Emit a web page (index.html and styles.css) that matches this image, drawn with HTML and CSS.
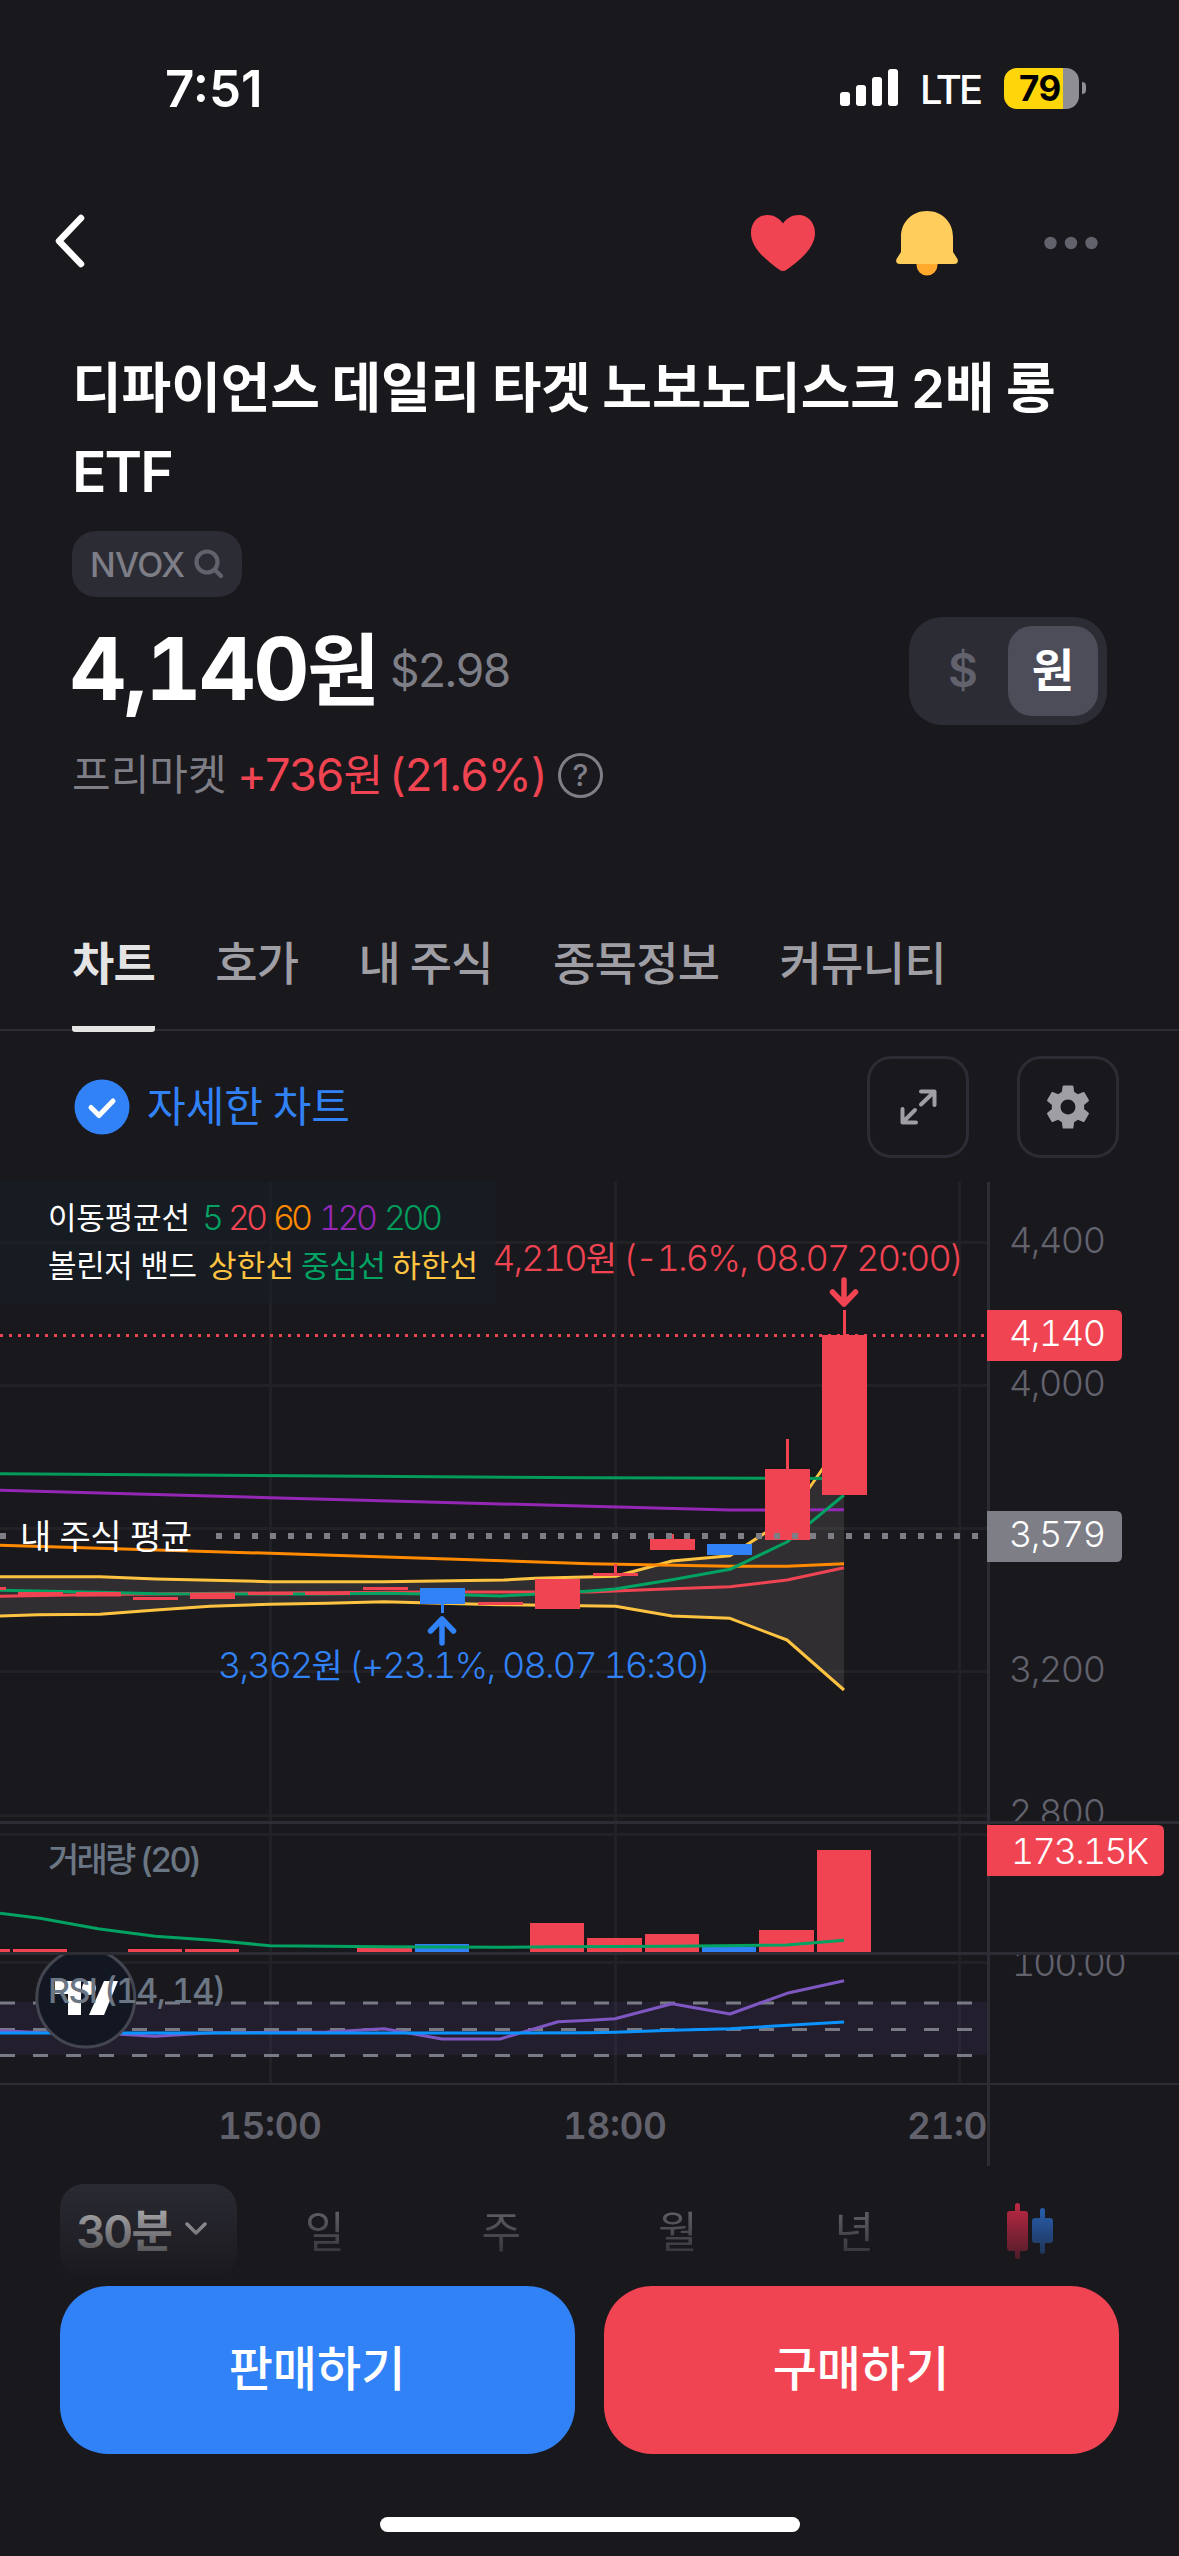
FILE: index.html
```html
<!DOCTYPE html>
<html lang="ko">
<head>
    <meta charset="UTF-8">
    <meta name="viewport" content="width=device-width, initial-scale=1.0">
    <title>NVOX</title>
    <link rel="stylesheet" href="styles.css">
</head>
<body>

<!-- Status bar -->
<div class="status-bar">
    <span class="time">7:51</span>
    <div class="status-right">
        <svg class="signal" width="58" height="38" viewBox="0 0 58 38" fill="#fff">
            <rect x="0" y="23" width="10" height="14" rx="3"/>
            <rect x="16" y="16" width="10" height="21" rx="3"/>
            <rect x="32" y="8" width="10" height="29" rx="3"/>
            <rect x="48" y="0" width="10" height="37" rx="3"/>
        </svg>
        <span class="network">LTE</span>
        <div class="battery"><span>79</span></div>
        <div class="battery-tip"></div>
    </div>
</div>

<!-- Navigation -->
<div class="nav">
    <svg width="34" height="56" viewBox="0 0 34 56" fill="none" stroke="#fff" stroke-width="6.5" stroke-linecap="round" stroke-linejoin="round">
        <path d="M28 5 L6 28 L28 51"/>
    </svg>
    <div class="nav-icons">
        <svg width="66" height="66" viewBox="0 0 66 66">
            <path fill="#f04452" d="M33 13.500C29 8 24 5 17.500 5C8 5 1 12.500 1 23C1 38 16 50 29 59.500Q33 62.500 37 59.500C50 50 65 38 65 23C65 12.500 58 5 48.500 5C42 5 37 8 33 13.500Z"/>
        </svg>
        <svg width="64" height="66" viewBox="0 0 64 66">
            <path fill="#ffa92d" d="M21.500 52H42.500V55A10.500 10.500 0 0 1 21.500 55Z"/>
            <path fill="#ffcd5b" d="M6 27C6 12 17 1 32 1S58 12 58 27V42L62.500 49Q64 54 59 54H5Q0 54 1.500 49L6 42Z"/>
        </svg>
        <svg width="54" height="14" viewBox="0 0 54 14" fill="#62626d">
            <circle cx="6.500" cy="7" r="6.200"/>
            <circle cx="27" cy="7" r="6.200"/>
            <circle cx="47.500" cy="7" r="6.200"/>
        </svg>
    </div>
</div>

<!-- Stock info -->
<div class="stock">
    <h1>디파이언스 데일리 타겟 노보노디스크 2배 롱<br><span class="etf">ETF</span></h1>
    <div class="ticker">
        <span>NVOX</span>
        <svg width="30" height="30" viewBox="0 0 30 30" fill="none" stroke="#62626d" stroke-width="4.200" stroke-linecap="round">
            <circle cx="13" cy="13" r="10.500"/>
            <path d="M21 21 L27 27"/>
        </svg>
    </div>
    <div class="price-row">
        <span class="price">4,140<span class="won">원</span></span>
        <span class="usd">$2.98</span>
        <div class="currency">
            <span>$</span>
            <span class="selected">원</span>
        </div>
    </div>
    <div class="change-row">
        <span class="market">프리마켓</span>
        <span class="change">+736<span class="won">원</span> (21.6%)</span>
        <span class="help">?</span>
    </div>
</div>

<!-- Tabs -->
<div class="tabs">
    <span class="tab active">차트</span>
    <span class="tab">호가</span>
    <span class="tab">내 주식</span>
    <span class="tab">종목정보</span>
    <span class="tab">커뮤니티</span>
</div>

<!-- Chart tools -->
<div class="tools">
    <svg width="56" height="56" viewBox="0 0 56 56">
        <circle cx="28" cy="28" r="27.500" fill="#3182f6"/>
        <path d="M17 28.500 L25 36.500 L39 22" fill="none" stroke="#fff" stroke-width="5" stroke-linecap="round" stroke-linejoin="round"/>
    </svg>
    <span class="detail">자세한 차트</span>
    <div class="tool-btn">
        <svg width="38" height="38" viewBox="0 0 38 38" fill="none" stroke="#9e9ea4" stroke-width="4" stroke-linecap="round" stroke-linejoin="round">
            <path d="M22 3.500H35.500V17M35 4L22 16.500"/>
            <path d="M3.500 21V34.500H17M4 34L16 22"/>
        </svg>
    </div>
    <div class="tool-btn">
        <svg width="54" height="54" viewBox="0 0 24 24" fill="#9e9ea4">
            <path d="M19.140 12.940c.040-.300.060-.610.060-.940 0-.320-.020-.640-.070-.940l2.030-1.580c.180-.140.230-.410.120-.610l-1.920-3.320c-.120-.220-.370-.290-.590-.220l-2.390.960c-.500-.380-1.030-.700-1.620-.940l-.360-2.540c-.040-.240-.240-.410-.480-.410h-3.840c-.240 0-.430.170-.470.410l-.360 2.540c-.590.240-1.130.570-1.620.940l-2.390-.960c-.220-.080-.470 0-.590.220L2.740 8.870c-.120.210-.080.470.120.610l2.030 1.580c-.050.300-.090.630-.090.940s.020.640.070.940l-2.030 1.580c-.180.140-.230.410-.120.610l1.920 3.320c.120.220.370.290.590.220l2.390-.960c.500.380 1.030.700 1.620.940l.360 2.540c.050.240.240.410.480.410h3.840c.240 0 .440-.170.470-.410l.360-2.540c.590-.240 1.130-.560 1.620-.940l2.390.960c.220.080.470 0 .590-.220l1.920-3.320c.120-.220.070-.470-.120-.610l-2.010-1.580zM12 15.300c-1.820 0-3.300-1.480-3.300-3.300s1.480-3.300 3.300-3.300 3.300 1.480 3.300 3.300-1.480 3.300-3.300 3.300z"/>
        </svg>
    </div>
</div>

<!-- Chart -->
<svg class="chart" width="1179" height="984" viewBox="0 1182 1179 984">
    <defs>
        <clipPath id="plot"><rect x="0" y="1182" width="987" height="984"/></clipPath>
        <clipPath id="price-axis"><rect x="987" y="1182" width="192" height="639"/></clipPath>
        <clipPath id="rsi-pane"><rect x="0" y="1955" width="1179" height="129"/></clipPath>
    </defs>

    <!-- grid -->
    <g class="grid">
        <path d="M0 1242.500H987M0 1385.500H987M0 1528.500H987M0 1671.500H987M0 1815.500H987M0 1834.500H987M0 1962.500H987"/>
        <path d="M270.500 1182V2083M615.500 1182V2083M959.500 1182V2083"/>
    </g>

    <!-- bollinger band -->
    <path fill="#fff2d8" fill-opacity=".1" d="M0 1576.700H100L156 1579L270 1581.700H384L504 1580L535 1578.300L615.500 1576.300L672 1561L730 1555.700L765 1533L787 1520L844 1438V1690L787 1640L730 1618.300L672 1616L615.500 1606.300L500 1604.700L440 1603.300L384 1601.700L327 1603.300L270 1604.300L210 1606.300L156 1610L100 1614.300L38 1614.700L0 1616Z"/>
    <g class="line">
        <path stroke="#ffc342" d="M0 1576.700H100L156 1579L270 1581.700H384L504 1580L535 1578.300L615.500 1576.300L672 1561L730 1555.700L765 1533L787 1520L844 1438"/>
        <path stroke="#ffc342" d="M0 1616L38 1614.700L100 1614.300L156 1610L210 1606.300L270 1604.300L327 1603.300L384 1601.700L440 1603.300L500 1604.700L615.500 1606.300L672 1616L730 1618.300L787 1640L844 1690"/>
        <path stroke="#049c5a" d="M0 1473.700L590 1477.700L844 1478.500"/>
        <path stroke="#9527b5" d="M0 1490.300L270 1497.700L590 1506.300L730 1510L844 1509.700"/>
        <path stroke="#ff8a00" d="M0 1545.300L270 1553.300L590 1563.700L730 1566.300H787L844 1563.700"/>
        <path stroke="#f04452" d="M0 1596.300L100 1594.500L270 1593L440 1592H590L672 1588.700L730 1586.700L787 1580L844 1567.700"/>
        <path stroke="#02a262" d="M0 1590.300L100 1592.300L156 1593.700L270 1594H327L384 1593.300L440 1594.300L500 1596L560 1593L590 1591L615 1589L672 1579.700L730 1569.300L787 1542L844 1495"/>
    </g>

    <!-- candles -->
    <g fill="#f04452">
        <rect x="0" y="1587" width="6" height="3"/>
        <rect x="18" y="1592" width="45" height="3.500"/>
        <rect x="76" y="1592" width="45" height="4.500"/>
        <rect x="133" y="1597" width="45" height="3"/>
        <rect x="190" y="1593" width="45" height="6"/>
        <rect x="248" y="1592" width="45" height="3"/>
        <rect x="305" y="1592" width="45" height="3"/>
        <rect x="363" y="1587" width="45" height="3"/>
        <rect x="478" y="1602" width="45" height="3"/>
        <rect x="535" y="1579" width="45" height="30"/>
        <rect x="593" y="1573" width="45" height="3"/>
        <rect x="614" y="1564" width="3" height="10"/>
        <rect x="650" y="1539" width="45" height="11"/>
        <rect x="671" y="1534" width="3" height="6"/>
        <rect x="765" y="1469" width="45" height="71"/>
        <rect x="786" y="1439" width="3" height="31"/>
        <rect x="822" y="1335" width="45" height="160"/>
        <rect x="843" y="1310" width="3" height="26"/>
    </g>
    <g fill="#3182f6">
        <rect x="420" y="1588" width="45" height="16"/>
        <rect x="441" y="1603" width="3" height="10"/>
        <rect x="707" y="1544" width="45" height="11"/>
    </g>
    <path d="M0 1335.500H987" stroke="#f04452" stroke-width="3" stroke-dasharray="3 6"/>
    <path d="M0 1536H6M216 1536H987" stroke="#7e7e87" stroke-width="6" stroke-dasharray="6 12"/>

    <!-- high / low marks -->
    <g fill="none" stroke-width="5.500" stroke-linecap="round" stroke-linejoin="round">
        <path stroke="#f04452" d="M844 1280V1304M832.500 1292L844 1304L855.500 1292"/>
        <path stroke="#3182f6" d="M442 1643V1619M430.500 1631L442 1619L453.500 1631"/>
    </g>
    <text x="492" y="1270.500" class="mark red" textLength="472">4,210<tspan class="ko">원</tspan> (-1.6%, 08.07 20:00)</text>
    <text x="218" y="1678" class="mark blue" textLength="493">3,362<tspan class="ko">원</tspan> (+23.1%, 08.07 16:30)</text>
    <text x="20" y="1549" class="avg" textLength="172">내 주식 평균</text>

    <!-- legend -->
    <rect x="0" y="1182" width="496" height="121" fill="#14202a" fill-opacity=".4"/>
    <g class="legend">
        <text x="48" y="1229" textLength="142">이동평균선</text>
        <text x="202" y="1230" class="num" fill="#02a262">5</text>
        <text x="228" y="1230" class="num" fill="#f04452" textLength="40">20</text>
        <text x="273" y="1230" class="num" fill="#ff8a00" textLength="40">60</text>
        <text x="319" y="1230" class="num" fill="#9527b5" textLength="59">120</text>
        <text x="384" y="1230" class="num" fill="#049c5a" textLength="59">200</text>
        <text x="48" y="1277" textLength="149">볼린저 밴드</text>
        <text x="208" y="1277" fill="#ffc342" textLength="86">상한선</text>
        <text x="301" y="1277" fill="#02a262" textLength="85">중심선</text>
        <text x="392" y="1277" fill="#ffc342" textLength="86">하한선</text>
    </g>

    <!-- volume -->
    <g fill="#f04452">
        <rect x="0" y="1949" width="10" height="3"/>
        <rect x="13" y="1949" width="54" height="3"/>
        <rect x="128" y="1949" width="54" height="3"/>
        <rect x="185" y="1949" width="54" height="3"/>
        <rect x="357" y="1947" width="55" height="5"/>
        <rect x="530" y="1923" width="54" height="29"/>
        <rect x="587" y="1938" width="55" height="14"/>
        <rect x="645" y="1934" width="54" height="18"/>
        <rect x="759" y="1930" width="55" height="22"/>
        <rect x="817" y="1850" width="54" height="102"/>
    </g>
    <rect x="415" y="1944" width="54" height="8" fill="#3182f6"/>
    <rect x="702" y="1947" width="54" height="5" fill="#3182f6"/>
    <path class="line" stroke="#02a262" d="M0 1913.300L40 1918.300L98 1928.700L155 1936.300L213 1940.300L270 1945.700L384 1946.700L500 1947.300L558 1946.700L672 1946.300L787 1945L844 1940.300"/>
    <text x="48" y="1872" class="pane-label" textLength="154">거래량 (20)</text>

    <!-- rsi -->
    <rect x="0" y="2002" width="987" height="53" fill="#7e57c2" fill-opacity=".1"/>
    <path d="M0 2003H987M0 2029.500H987M0 2055.500H987" stroke="#787b86" stroke-width="3" stroke-dasharray="15 18"/>
    <path class="line" stroke="#7e57c2" d="M0 2030.700L40 2032.500L98 2033L155 2036.300L213 2032.700L327 2032L384 2028.700L442 2039H500L558 2021.700L590 2020.300L615 2018.700L672 2003.700L730 2014L787 1993.300L844 1980.700"/>
    <path class="line" stroke="#0b94ff" d="M0 2033H500L590 2032.700L615 2032.300L672 2030.300L730 2028.700L844 2022"/>
    <g clip-path="url(#rsi-pane)">
        <circle cx="85.800" cy="1998" r="49" fill="#131722" stroke="#434651" stroke-width="3"/>
        <g fill="#fff">
            <path d="M55 1981H81V2015H68V1994H55Z"/>
            <circle cx="89" cy="1988" r="7"/>
            <path d="M104 1981H118L104 2015H89Z"/>
        </g>
        <text x="1012" y="1976" class="axis" textLength="115">100.00</text>
    </g>
    <text x="48" y="2003" class="pane-label" textLength="178">RSI (14, 14)</text>

    <!-- pane separators -->
    <g fill="#2c2c35">
        <rect x="0" y="1821" width="1179" height="3"/>
        <rect x="0" y="1952" width="1179" height="3"/>
        <rect x="0" y="2083" width="1179" height="2"/>
        <rect x="987" y="1182" width="3" height="984"/>
    </g>

    <!-- price axis -->
    <g class="axis" clip-path="url(#price-axis)">
        <text x="1009" y="1252.500" textLength="97">4,400</text>
        <text x="1009" y="1395.500" textLength="97">4,000</text>
        <text x="1009" y="1681.500" textLength="97">3,200</text>
        <text x="1009" y="1825" textLength="97">2,800</text>
    </g>
    <path fill="#f04452" d="M987 1310H1116Q1122 1310 1122 1316V1355Q1122 1361 1116 1361H987Z"/>
    <path fill="#7e7e87" d="M987 1511H1116Q1122 1511 1122 1517V1556Q1122 1562 1116 1562H987Z"/>
    <path fill="#f04452" d="M987 1825H1158Q1164 1825 1164 1831V1870Q1164 1876 1158 1876H987Z"/>
    <g class="axis on">
        <text x="1009" y="1346" textLength="97">4,140</text>
        <text x="1009" y="1547" textLength="97">3,579</text>
        <text x="1011" y="1864" textLength="138">173.15K</text>
    </g>

    <!-- time axis -->
    <g class="times" clip-path="url(#plot)">
        <text x="218" y="2139" textLength="104">15:00</text>
        <text x="563" y="2139" textLength="104">18:00</text>
        <text x="907" y="2139" textLength="104">21:00</text>
    </g>
</svg>

<!-- Interval -->
<div class="intervals">
    <div class="interval selected">
        <span>30<span class="won">분</span></span>
        <svg width="24" height="16" viewBox="0 0 24 16" fill="none" stroke="#e4e4e5" stroke-width="3.500" stroke-linecap="round" stroke-linejoin="round">
            <path d="M3 3 L12 12 L21 3"/>
        </svg>
    </div>
    <span class="interval">일</span>
    <span class="interval">주</span>
    <span class="interval">월</span>
    <span class="interval">년</span>
    <div class="interval">
        <svg width="48" height="58" viewBox="0 0 48 58">
            <g fill="#f52d50">
                <rect x="8" y="1" width="5" height="56" rx="2.500"/>
                <rect x="0" y="9" width="21" height="40" rx="3"/>
            </g>
            <g fill="#2f7bea">
                <rect x="33" y="6" width="5" height="46" rx="2.500"/>
                <rect x="25" y="16" width="21" height="25" rx="3"/>
            </g>
        </svg>
    </div>
</div>

<!-- Order buttons -->
<div class="actions">
    <button class="sell">판매하기</button>
    <button class="buy">구매하기</button>
</div>

<div class="home-bar"></div>

</body>
</html>
```

FILE: styles.css
```css
* {
    box-sizing: border-box;
}

body {
    margin: 0;
    width: 1179px;
    height: 2556px;
    overflow: hidden;
    display: flex;
    flex-direction: column;
    background-color: #19181d;
    color: #fff;
    font-family: Inter, "Noto Sans CJK KR", sans-serif;
}

svg {
    display: block;
    flex-shrink: 0;
}

/* Status bar */
.status-bar {
    display: flex;
    justify-content: space-between;
    height: 176px;
    padding: 0 93px 0 165px;
}

.time {
    font-size: 51px;
    font-weight: 600;
    line-height: 177px;
}

.status-right {
    display: flex;
    align-items: center;
    height: 176px;
}

.network {
    margin: 2px 0 0 22px;
    font-size: 40px;
    font-weight: 500;
    letter-spacing: -3px;
    width: 84px;
}

.battery {
    width: 75px;
    height: 41px;
    border-radius: 13px;
    background: linear-gradient(to right, #ffd60a 59px, #8e8e93 59px);
    color: #000;
    font-size: 35px;
    font-weight: 700;
    line-height: 41px;
    padding-left: 15px;
    letter-spacing: -0.5px;
}

.battery-tip {
    width: 4px;
    height: 12px;
    margin-left: 3px;
    border-radius: 0 4px 4px 0;
    background-color: #8e8e93;
}

/* Navigation */
.nav {
    display: flex;
    justify-content: space-between;
    align-items: center;
    height: 130px;
    padding: 0 81px 0 53px;
}

.nav-icons {
    display: flex;
    align-items: center;
    gap: 79px;
    padding-top: 4px;
}

.nav-icons svg:last-child {
    margin-left: 6px;
}

/* Stock info */
.stock {
    height: 580px;
    padding: 41px 72px 0;
}

h1 {
    margin: 0;
    height: 184px;
    font-size: 54px;
    font-weight: 600;
    line-height: 84px;
    letter-spacing: -0.1px;
    word-spacing: -2px;
    white-space: nowrap;
}

.etf {
    font-size: 57px;
    line-height: 80px;
    letter-spacing: -2px;
}

.ticker {
    display: flex;
    align-items: center;
    justify-content: space-between;
    width: 170px;
    height: 66px;
    padding: 0 18px;
    border-radius: 24px;
    background-color: #2c2c35;
    color: #7e7e87;
    font-size: 34px;
    font-weight: 500;
    letter-spacing: -0.7px;
}

.price-row {
    display: flex;
    align-items: center;
    height: 108px;
    margin-top: 20px;
}

.price {
    width: 320px;
    margin-left: -2px;
    padding-bottom: 3px;
    font-size: 87px;
    font-weight: 700;
    font-variant-numeric: tabular-nums;
    letter-spacing: -2.2px;
    line-height: 100px;
    white-space: nowrap;
}

.price .won {
    font-size: 79px;
}

.usd {
    padding-bottom: 3px;
    color: #7e7e87;
    font-size: 46px;
    letter-spacing: -1.6px;
}

.currency {
    display: flex;
    align-items: center;
    width: 198px;
    height: 108px;
    margin-left: auto;
    padding: 9px;
    border-radius: 33px;
    background-color: #2c2c35;
    font-size: 46px;
    font-weight: 600;
}

.currency span {
    width: 90px;
    height: 90px;
    line-height: 88px;
    border-radius: 24px;
    text-align: center;
    color: #62626d;
}

.currency .selected {
    background-color: #4d4d59;
    color: #fff;
}

.change-row {
    display: flex;
    align-items: center;
    height: 60px;
    margin-top: 20px;
    font-size: 45px;
    line-height: 60px;
}

.market {
    width: 165px;
    color: #7e7e87;
    font-size: 42px;
}

.change {
    width: 309px;
    color: #f04452;
    letter-spacing: -0.7px;
    word-spacing: -5px;
    white-space: nowrap;
}

.change .won {
    font-size: 43px;
}

.help {
    width: 45px;
    height: 45px;
    margin-left: 12px;
    border: 3px solid #7e7e87;
    border-radius: 50%;
    color: #7e7e87;
    font-size: 30px;
    font-weight: 500;
    line-height: 39px;
    text-align: center;
}

/* Tabs */
.tabs {
    display: flex;
    gap: 60px;
    height: 145px;
    padding-left: 72px;
    border-bottom: 2px solid #2c2c35;
    font-size: 46px;
    font-weight: 500;
    letter-spacing: -0.7px;
    word-spacing: -2px;
    color: #9e9ea4;
}

.tab {
    height: 146px;
    padding-top: 43px;
    line-height: 68px;
    white-space: nowrap;
}

.tab.active {
    color: #e4e4e5;
    font-weight: 700;
    border-bottom: 6px solid #e4e4e5;
    border-radius: 3px;
}

/* Chart tools */
.tools {
    display: flex;
    align-items: center;
    height: 151px;
    padding: 1px 60px 0 74px;
}

.detail {
    flex: 1;
    margin-left: 17px;
    padding-bottom: 7px;
    color: #3182f6;
    font-size: 42px;
    word-spacing: -2px;
}

.tool-btn {
    display: flex;
    align-items: center;
    justify-content: center;
    width: 102px;
    height: 102px;
    margin-left: 48px;
    border: 3px solid #2c2c35;
    border-radius: 24px;
}

/* Chart */
.chart {
    font-variant-numeric: tabular-nums;
}

.grid path {
    fill: none;
    stroke: #212126;
    stroke-width: 3;
}

.line {
    fill: none;
    stroke-width: 3;
    stroke-linejoin: round;
}

.mark {
    font-size: 36px;
    font-weight: 350;
}

.mark .ko {
    font-size: 34px;
    font-weight: 400;
}

.red {
    fill: #f04452;
}

.blue {
    fill: #3182f6;
}

.avg {
    fill: #fff;
    font-size: 34px;
}

.legend {
    fill: #fff;
    font-size: 31px;
}

.legend .num {
    font-size: 34px;
    font-weight: 350;
}

.pane-label {
    fill: #6b7684;
    font-size: 34px;
    font-weight: 550;
}

.axis {
    fill: #62626d;
    font-size: 36px;
    font-weight: 350;
}

.axis.on {
    fill: #fff;
}

.times {
    fill: #62626d;
    font-size: 37px;
    font-weight: 600;
}

/* Intervals fade out behind the order buttons */
.intervals {
    display: flex;
    align-items: center;
    height: 120px;
    padding: 0 60px;
    -webkit-mask-image: linear-gradient(to bottom, #000 10px, transparent 120px);
    mask-image: linear-gradient(to bottom, #000 10px, transparent 120px);
}

.interval {
    display: flex;
    justify-content: center;
    align-items: center;
    width: 176.500px;
    height: 94px;
    margin-bottom: -10px;
    padding-bottom: 5px;
    color: #7e7e87;
    font-size: 43px;
}

.interval.selected {
    gap: 13px;
    padding: 0 12px 5px 0;
    border-radius: 24px;
    background-color: #2c2c35;
    color: #e4e4e5;
    font-size: 45px;
    font-weight: 600;
    letter-spacing: -1.5px;
}

.interval:last-child {
    padding-bottom: 0;
}

/* Order buttons */
.actions {
    display: flex;
    gap: 29px;
    height: 168px;
    padding: 0 60px;
}

.actions button {
    flex: 1;
    padding: 0 1px 10px 0;
    border: none;
    border-radius: 48px;
    color: #fff;
    font-family: inherit;
    font-size: 48px;
    font-weight: 500;
}

.sell {
    background-color: #3182f6;
}

.buy {
    background-color: #f04452;
}

.home-bar {
    width: 420px;
    height: 15px;
    margin: 63px auto 0;
    border-radius: 8px;
    background-color: #fff;
}
```
